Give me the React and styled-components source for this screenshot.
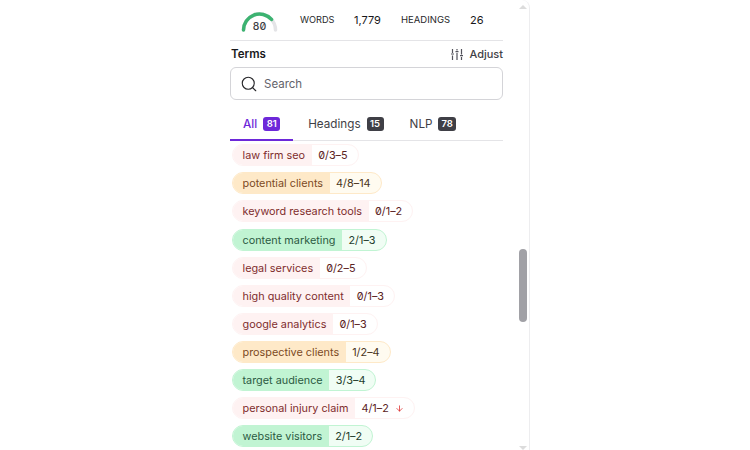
import React from "react";
import styled, { createGlobalStyle } from "styled-components";
import { Search, ArrowDown } from "lucide-react";

const GlobalStyle = createGlobalStyle`
  html, body {
    margin: 0;
    height: 100%;
    background: #fff;
    overflow: hidden;
  }
  body {
    font-family: Inter, "Liberation Sans", sans-serif;
  }
`;

const Page = styled.div`
  width: 750px;
  height: 450px;
  padding-left: 220px;
  box-sizing: border-box;
`;

const Panel = styled.div`
  position: relative;
  width: 310px;
  height: 450px;
  box-sizing: border-box;
  padding: 0 26px 0 10px;
  border-right: 1px solid #ededef;
  border-top-right-radius: 8px;
  overflow: hidden;
  display: flex;
  flex-direction: column;
`;

const Stats = styled.div`
  height: 41px;
  flex: none;
  box-sizing: border-box;
  display: flex;
  align-items: center;
  border-bottom: 1px solid #e4e4e7;
  padding: 0 0 0 11px;
`;

const Gauge = styled.div`
  position: relative;
  width: 37px;
  height: 23px;
  margin-right: 22px;
  margin-top: 2px;
  flex: none;
`;

const GaugeValue = styled.span`
  position: absolute;
  left: 0;
  right: 0;
  bottom: 0;
  text-align: center;
  font-size: 10.5px;
  font-weight: 500;
  line-height: 13px;
  color: #3f3f46;
  font-feature-settings: "zero";
`;

const StatLabel = styled.span`
  font-size: ${(p) => p.$size || 9.5}px;
  color: #27272a;
  line-height: 14px;
  width: ${(p) => p.$width}px;
  flex: none;
`;

const StatValue = styled.span`
  font-size: 11px;
  font-weight: 400;
  color: #18181b;
  width: ${(p) => p.$width}px;
  flex: none;
`;

const TermsHead = styled.div`
  display: flex;
  justify-content: space-between;
  align-items: center;
  height: 26px;
  flex: none;
  padding-left: 1px;
`;

const TermsTitle = styled.span`
  font-size: 11.5px;
  font-weight: 600;
  color: #18181b;
`;

const AdjustButton = styled.span`
  display: flex;
  align-items: center;
  gap: 6px;
  font-size: 11px;
  font-weight: 500;
  color: #3f3f46;
`;

const SearchBox = styled.div`
  height: 33px;
  flex: none;
  box-sizing: border-box;
  border: 1px solid #d4d4d8;
  border-radius: 6px;
  display: flex;
  align-items: center;
  gap: 6px;
  padding-left: 9px;
  font-size: 11.5px;
  color: #63636b;
`;

const Tabs = styled.div`
  display: flex;
  height: 41px;
  flex: none;
  border-bottom: 1px solid #e4e4e7;
  box-sizing: border-box;
`;

const Tab = styled.div`
  display: flex;
  align-items: center;
  gap: 6px;
  padding: 9px 13px 0;
  font-size: 11.7px;
  font-weight: ${(p) => (p.$active ? 500 : 400)};
  margin-bottom: -1px;
  margin-right: ${(p) => (p.$active ? 2 : 0)}px;
  color: ${(p) => (p.$active ? "#6d28d9" : "#3f3f46")};
  border-bottom: 2px solid ${(p) => (p.$active ? "#6d28d9" : "transparent")};
`;

const TabCount = styled.span`
  font-size: 9.5px;
  font-weight: 600;
  line-height: 14px;
  padding: 0 3px;
  min-width: 11px;
  text-align: center;
  border-radius: 3px;
  color: #fff;
  background: ${(p) => (p.$active ? "#6d28d9" : "#3f3f46")};
`;

const TermList = styled.div`
  display: flex;
  flex-direction: column;
  align-items: flex-start;
  gap: 6.1px;
  padding: 3.3px 0 0 1.5px;
`;

const tones = {
  red: { bg: "#fef2f2", light: "#fff", border: "#fef2f2", text: "#7f2d2d", count: "#5b2323" },
  amber: { bg: "#fee9c8", light: "#fffbf0", border: "#fee9c8", text: "#7c4a24", count: "#4a3520" },
  green: { bg: "#c1f4d3", light: "#f0fdf4", border: "#c1f4d3", text: "#2c5a42", count: "#1f3d2d" },
};

const Term = styled.div`
  display: flex;
  height: 22px;
  box-sizing: border-box;
  border: 1px solid ${(p) => tones[p.$tone].border};
  border-radius: 11px;
  overflow: hidden;
  font-size: 10.85px;
  line-height: 20px;
  color: ${(p) => tones[p.$tone].text};
  background: ${(p) => tones[p.$tone].light};
`;

const TermName = styled.span`
  padding: 0 6.5px 0 10px;
  background: ${(p) => tones[p.$tone].bg};
`;

const TermCount = styled.span`
  display: flex;
  align-items: center;
  gap: 6px;
  padding: 0 10px 0 6.5px;
  font-feature-settings: "zero";
  color: ${(p) => tones[p.$tone].count};
`;

const Track = styled.div`
  position: absolute;
  top: 0;
  bottom: 0;
  right: 0;
  width: 15px;
`;

const Thumb = styled.div`
  position: absolute;
  top: 249px;
  left: 5px;
  width: 8px;
  height: 73px;
  border-radius: 4px;
  background: #a1a1a6;
`;

const Arrow = styled.div`
  position: absolute;
  left: 5px;
  ${(p) => (p.$up ? "top: 5px;" : "bottom: 0;")}
  width: 0;
  height: 0;
  border-left: 4px solid transparent;
  border-right: 4px solid transparent;
  ${(p) => (p.$up ? "border-bottom: 4px solid #dcdcdc;" : "border-top: 4px solid #dcdcdc;")}
`;

const terms = [
  ["law firm seo", "0/3–5", "red"],
  ["potential clients", "4/8–14", "amber"],
  ["keyword research tools", "0/1–2", "red"],
  ["content marketing", "2/1–3", "green"],
  ["legal services", "0/2–5", "red"],
  ["high quality content", "0/1–3", "red"],
  ["google analytics", "0/1–3", "red"],
  ["prospective clients", "1/2–4", "amber"],
  ["target audience", "3/3–4", "green"],
  ["personal injury claim", "4/1–2", "red", true],
  ["website visitors", "2/1–2", "green"],
];

const AdjustIcon = () => (
  <svg width="12" height="13" viewBox="0 0 12 13" fill="none" stroke="#52525b" strokeWidth="1.2">
    <path d="M1.5 1v4M1.5 7.5V12M6 1v1.5M6 5v7M10.5 1v5.5M10.5 9v3" />
    <path d="M0 6h3M4.5 3.7h3M9 7.7h3" />
  </svg>
);

export default function App() {
  return (
    <Page>
      <GlobalStyle />
      <Panel>
        <Stats>
          <Gauge>
            <svg width="37" height="23" viewBox="0 0 37 23" fill="none">
              <path d="M2.5 20a16 16 0 0 1 32 0" stroke="#e4e4e7" strokeWidth="3.5" strokeLinecap="round" />
              <path d="M2.5 20a16 16 0 0 1 28-10.6" stroke="#3cb371" strokeWidth="3.5" strokeLinecap="round" />
            </svg>
            <GaugeValue>80</GaugeValue>
          </Gauge>
          <StatLabel $width={54} $size={9.2}>WORDS</StatLabel>
          <StatValue $width={47}>1,779</StatValue>
          <StatLabel $width={69}>HEADINGS</StatLabel>
          <StatValue>26</StatValue>
        </Stats>
        <TermsHead>
          <TermsTitle>Terms</TermsTitle>
          <AdjustButton>
            <AdjustIcon />
            Adjust
          </AdjustButton>
        </TermsHead>
        <SearchBox>
          <Search size={18} strokeWidth={1.5} color="#27272a" />
          Search
        </SearchBox>
        <Tabs>
          <Tab $active>
            All <TabCount $active>81</TabCount>
          </Tab>
          <Tab>
            Headings <TabCount>15</TabCount>
          </Tab>
          <Tab>
            NLP <TabCount>78</TabCount>
          </Tab>
        </Tabs>
        <TermList>
          {terms.map(([name, count, tone, over]) => (
            <Term key={name} $tone={tone}>
              <TermName $tone={tone}>{name}</TermName>
              <TermCount $tone={tone}>
                {count}
                {over && <ArrowDown size={9} strokeWidth={2} color="#dc2626" />}
              </TermCount>
            </Term>
          ))}
        </TermList>
        <Track>
          <Arrow $up />
          <Thumb />
          <Arrow />
        </Track>
      </Panel>
    </Page>
  );
}
